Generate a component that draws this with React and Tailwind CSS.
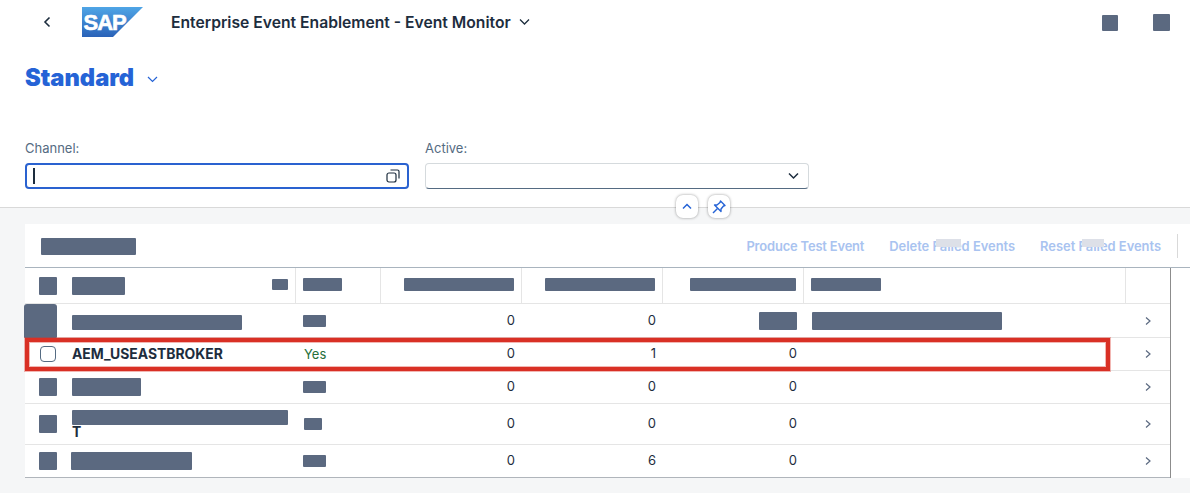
import React from "react";

const F = { fontFamily: '"Inter","Liberation Sans",sans-serif' };

function R({ w, h, className = "" }) {
  return <div className={"bg-[#5b6980] rounded-[1px] shrink-0 " + className} style={{ width: w, height: h }} />;
}

function Chev() {
  return (
    <svg width="8" height="10" viewBox="0 0 8 10" fill="none" stroke="#5b6980" strokeWidth="1.2">
      <path d="M2 1.5 L6 5 L2 8.5" />
    </svg>
  );
}

function SapLogo() {
  return (
    <svg width="61" height="30" viewBox="0 0 61 30">
      <defs>
        <linearGradient id="g" x1="0" y1="0" x2="0" y2="1">
          <stop offset="0" stopColor="#4fa5e6" />
          <stop offset="1" stopColor="#2a62b8" />
        </linearGradient>
      </defs>
      <path d="M0 0H61L31 30H0Z" fill="url(#g)" />
      <text x="1.5" y="23" fontFamily="Liberation Sans" fontWeight="700" fontSize="22" letterSpacing="-1" fill="#fff" stroke="#fff" strokeWidth="0.6">SAP</text>
    </svg>
  );
}

const cols = "grid grid-cols-[271px_85px_141px_141px_141px_322px_45px]";

function Row({ h, check, name, active, a, b, c, d, last = false }) {
  return (
    <div className={cols + " border-b " + (last ? "border-[#b0b5bb]" : "border-[#e5e5e5]")} style={{ height: h }}>
      <div className="flex items-center pl-[14px]">
        <div className="w-[33px] flex justify-start">{check}</div>
        <div className="flex flex-col">{name}</div>
      </div>
      <div className="flex items-center pl-[7px]">{active}</div>
      <div className="flex items-center justify-end pr-[7px] text-[13px] text-[#1d2d3e]">{a}</div>
      <div className="flex items-center justify-end pr-[7px] text-[13px] text-[#1d2d3e]">{b}</div>
      <div className="flex items-center justify-end pr-[7px] text-[13px] text-[#1d2d3e]">{c}</div>
      <div className="flex items-center pl-[8px]">{d}</div>
      <div className="flex items-center justify-end pr-[19px]"><Chev /></div>
    </div>
  );
}

export default function App() {
  return (
    <div className="w-[1190px] h-[493px] overflow-hidden bg-[#f5f6f7] flex flex-col" style={F}>
      <div className="bg-white h-[208px] border-b border-[#d9d9d9] shrink-0 relative">
        <div className="flex items-center h-[45px] pb-[1px]">
          <svg className="ml-[43px]" width="8" height="12" viewBox="0 0 8 12" fill="none" stroke="#1d2d3e" strokeWidth="1.6">
            <path d="M6.5 1.5 L2 6 L6.5 10.5" />
          </svg>
          <div className="ml-[31px]"><SapLogo /></div>
          <div className="ml-[28px] pt-[2px] text-[15.7px] font-semibold text-[#1d2d3e] whitespace-nowrap">Enterprise Event Enablement - Event Monitor</div>
          <svg className="ml-[8px]" width="11" height="8" viewBox="0 0 11 8" fill="none" stroke="#1d2d3e" strokeWidth="1.3">
            <path d="M1 1.5 L5.5 6 L10 1.5" />
          </svg>
          <div className="ml-auto flex items-end gap-[35px] mr-[20px]">
            <R w={16} h={16} />
            <R w={17} h={17} />
          </div>
        </div>
        <div className="flex items-center pl-[25px] h-[36px] mt-[15px]">
          <div className="text-[23.7px] font-black text-[#2563d6] leading-none">Standard</div>
          <svg className="ml-[13px] mt-[3px]" width="11" height="7" viewBox="0 0 11 7" fill="none" stroke="#2563d6" strokeWidth="1.2">
            <path d="M1 1 L5.5 5.5 L10 1" />
          </svg>
        </div>
        <div className="flex gap-[16px] pl-[25px] mt-[44px]">
          <div className="w-[384px]">
            <div className="text-[13px] text-[#556b82] leading-[16px] mb-[7px]">Channel:</div>
            <div className="h-[26px] rounded-[4px] border-2 border-[#2a62d0] flex items-center justify-between pl-[6px] pr-[7px]">
              <div className="w-[2px] h-[16px] bg-[#1d2d3e]" />
              <svg width="14" height="14" viewBox="0 0 14 14" fill="none" stroke="#1d2d3e" strokeWidth="1.2">
                <rect x="1" y="4" width="9" height="9" rx="2" />
                <path d="M4.5 1H11.5a1.5 1.5 0 0 1 1.5 1.5V9.5" />
              </svg>
            </div>
          </div>
          <div className="w-[384px]">
            <div className="text-[13px] text-[#556b82] leading-[16px] mb-[7px]">Active:</div>
            <div className="h-[26px] rounded-[4px] border border-[#d5dadd] border-b-[#556b82] flex items-center justify-end pr-[9px]">
              <svg width="11" height="8" viewBox="0 0 11 8" fill="none" stroke="#1d2d3e" strokeWidth="1.5">
                <path d="M1 1.5 L5.5 6 L10 1.5" />
              </svg>
            </div>
          </div>
        </div>
        <div className="absolute left-[676px] top-[195px] flex gap-[10px]">
          <div className="w-[22px] h-[23px] rounded-[7px] bg-white shadow-[0_0_3px_rgba(0,0,0,0.4)] flex items-center justify-center">
            <svg width="10" height="7" viewBox="0 0 10 7" fill="none" stroke="#2563d6" strokeWidth="1.5">
              <path d="M1 5.5 L5 1.5 L9 5.5" />
            </svg>
          </div>
          <div className="w-[22px] h-[23px] rounded-[7px] bg-white shadow-[0_0_3px_rgba(0,0,0,0.4)] flex items-center justify-center">
            <svg width="14" height="14" viewBox="0 0 14 14" fill="none" stroke="#2563d6" strokeWidth="1.4" strokeLinejoin="round">
              <path d="M8.5 1 L13 5.5 L11.5 6 L9 9 L9 11.5 L2.5 5 L5 5 L8 2.5 Z" />
              <path d="M5.5 8.5 L1 13" />
            </svg>
          </div>
        </div>
      </div>

      <div className="ml-[25px] mt-[16px] bg-white w-[1165px] flex-none">
        <div className="h-[44px] border-b border-[#a9b4be] flex items-center pl-[16px] relative">
          <R w={95} h={17} className="mt-[1px]" />
          <div className="ml-auto flex items-center text-[12.9px] font-semibold text-[#a9c3f0] pt-[3px]">
            <span className="whitespace-nowrap tracking-[-0.15px]">Produce Test Event</span>
            <span className="whitespace-nowrap ml-[25px] relative">
              Delete Failed Events
              <span className="absolute left-[47px] top-[2px] w-[25px] h-[8px] bg-[#dde0e8]" />
            </span>
            <span className="whitespace-nowrap ml-[25px] relative">
              Reset Failed Events
              <span className="absolute left-[42px] top-[2px] w-[22px] h-[8px] bg-[#dde0e8]" />
            </span>
            <div className="w-px h-[24px] bg-[#d9d9d9] ml-[16px] mr-[12px] mt-[-3px]" />
          </div>
        </div>

        <div className="w-[1146px] border-r border-[#8c8c8c] relative">
          <div className={cols + " h-[36px] border-b border-[#e5e5e5]"}>
            <div className="flex items-center pl-[14px] border-r border-[#e5e5e5] relative">
              <R w={18} h={18} />
              <R w={53} h={18} className="ml-[15px]" />
              <R w={16} h={11} className="ml-auto mr-[7px] mt-[-3px]" />
            </div>
            <div className="flex items-center pl-[7px] border-r border-[#e5e5e5]"><R w={39} h={13} className="mt-[-3px]" /></div>
            <div className="flex items-center justify-end pr-[7px] border-r border-[#e5e5e5]"><R w={110} h={13} className="mt-[-3px]" /></div>
            <div className="flex items-center justify-end pr-[7px] border-r border-[#e5e5e5]"><R w={110} h={13} className="mt-[-3px]" /></div>
            <div className="flex items-center justify-end pr-[7px] border-r border-[#e5e5e5]"><R w={106} h={13} className="mt-[-3px]" /></div>
            <div className="flex items-center pl-[7px] border-r border-[#e5e5e5]"><R w={70} h={13} className="mt-[-3px]" /></div>
            <div />
          </div>
          <Row h={34} check={<R w={33} h={34} className="ml-[-15px] mb-[-1px] rounded-t-[3px]" />}
            name={<R w={170} h={15} className="mt-[3px]" />} active={<R w={23} h={12} className="mt-[1px]" />} a="0" b="0"
            c={<R w={38} h={18} />} d={<R w={190} h={18} />} />
          <Row h={33} check={<div className="ml-[1px] w-[16px] h-[16px] rounded-[4px] border border-[#556b82] bg-white" />}
            name={<span className="text-[13.9px] font-bold text-[#1d2d3e] whitespace-nowrap">AEM_USEASTBROKER</span>}
            active={<span className="ml-[1px] mt-[1px] text-[13px] text-[#256f3a]">Yes</span>} a="0" b="1" c="0" />
          <Row h={33} check={<R w={18} h={18} />} name={<R w={69} h={18} />} active={<R w={23} h={12} />} a="0" b="0" c="0" />
          <Row h={41} check={<R w={18} h={18} />}
            name={<><R w={216} h={15} /><span className="text-[13.9px] font-bold text-[#1d2d3e] leading-[14px]">T</span></>}
            active={<R w={18} h={12} className="ml-[1px]" />} a="0" b="0" c="0" />
          <Row h={33} last check={<R w={18} h={18} />} name={<R w={121} h={18} className="ml-[-1px]" />} active={<R w={23} h={12} />} a="0" b="6" c="0" />
          <div className="absolute left-0 top-[70px] w-[1085px] h-[33px] border-[4px] border-[#d93025] shadow-[0_0_0_1px_rgba(217,48,37,0.35),inset_0_0_0_1px_rgba(217,48,37,0.35)] pointer-events-none" />
        </div>
      </div>
    </div>
  );
}
